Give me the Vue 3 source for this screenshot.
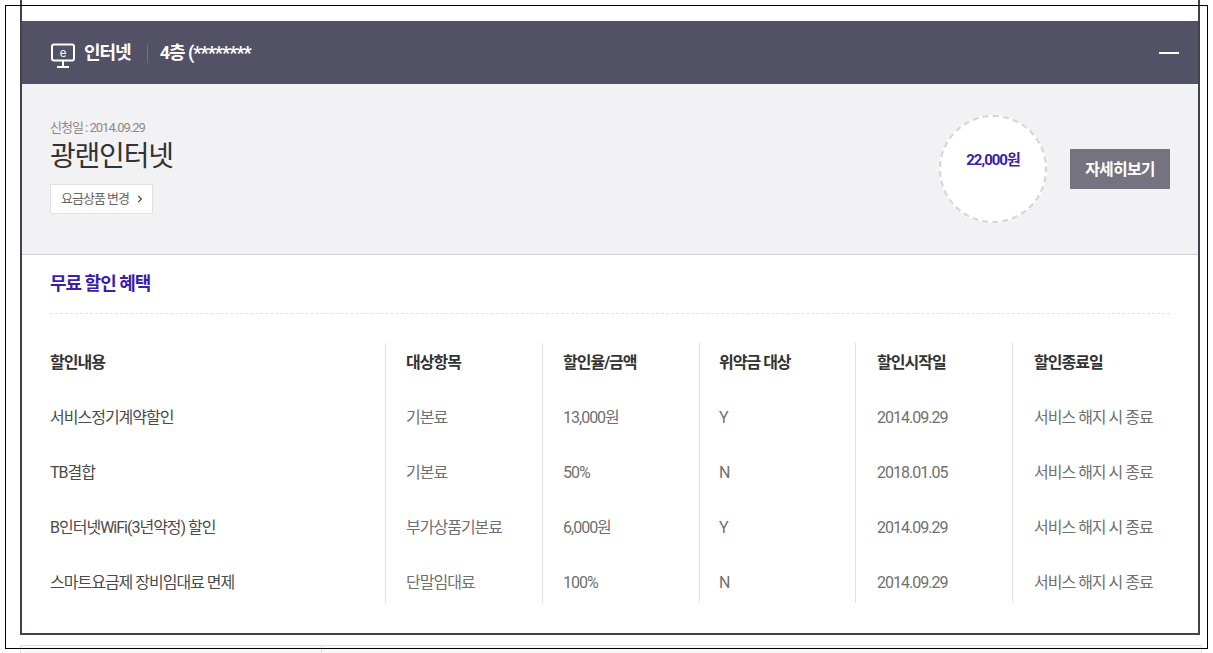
<script setup>
const columns = ['할인내용', '대상항목', '할인율/금액', '위약금 대상', '할인시작일', '할인종료일']

const rows = [
  ['서비스정기계약할인', '기본료', '13,000원', 'Y', '2014.09.29', '서비스 해지 시 종료'],
  ['TB결합', '기본료', '50%', 'N', '2018.01.05', '서비스 해지 시 종료'],
  ['B인터넷WiFi(3년약정) 할인', '부가상품기본료', '6,000원', 'Y', '2014.09.29', '서비스 해지 시 종료'],
  ['스마트요금제 장비임대료 면제', '단말임대료', '100%', 'N', '2014.09.29', '서비스 해지 시 종료'],
]
</script>

<template>
  <div class="page">
    <div class="frame" />
    <section class="card">
      <header class="head">
        <svg class="tv" width="26" height="26" viewBox="0 0 26 26" fill="none" stroke="#fff" stroke-width="2">
          <rect x="2" y="1.5" width="22" height="16" rx="2" />
          <path d="M13 18v5M7 24h12" />
          <text x="13" y="13.5" text-anchor="middle" class="tv-e">e</text>
        </svg>
        <span class="head-title">인터넷</span>
        <span class="head-sep" />
        <span class="head-addr">4층 (********</span>
        <span class="head-close" />
      </header>

      <div class="summary">
        <div class="info">
          <p class="date">신청일 : 2014.09.29</p>
          <h2 class="product">광랜인터넷</h2>
          <button class="change">
            요금상품 변경
            <svg width="6" height="8" viewBox="0 0 6 8" fill="none" stroke="#444" stroke-width="1.2"><path d="M1.2 .8 4.4 4 1.2 7.2" /></svg>
          </button>
        </div>
        <div class="price"><span>22,000원</span></div>
        <button class="detail">자세히보기</button>
      </div>

      <div class="benefit">
        <h3 class="benefit-title">무료 할인 혜택</h3>
        <div class="table">
          <template v-for="(name, c) in columns" :key="name">
            <div class="cell th" :class="{ first: c === 0 }">{{ name }}</div>
          </template>
          <template v-for="(row, r) in rows" :key="r">
            <div
              v-for="(val, c) in row"
              :key="c"
              class="cell"
              :class="{ first: c === 0, last: r === rows.length - 1 }"
            >{{ val }}</div>
          </template>
        </div>
      </div>
    </section>
    <div class="next"><div class="next-left" /></div>
  </div>
</template>

<style>
html, body { margin: 0; background: #fff; overflow: hidden; }
</style>

<style scoped>
.page { position: relative; height: 653px; overflow: hidden; padding-left: 20px; box-sizing: border-box; font-family: Roboto, "Noto Sans CJK KR", sans-serif; }
.frame { position: absolute; left: 5px; top: 5px; width: 1201px; height: 642px; border: 1px solid #000; z-index: 2; pointer-events: none; }

.card { width: 1180px; height: 635px; box-sizing: border-box; padding-top: 21px; border: 2px solid #42414f; border-top: 0; background: #fff; }

.head { display: flex; align-items: center; height: 63px; padding: 0 19px 0 28px; background: #535165; color: #fff; }
.tv { margin-top: 6px; margin-right: 8px; }
.tv-e { font-size: 12px; font-weight: 400; fill: #fff; stroke: none; font-family: "Liberation Sans", sans-serif; }
.head-title { margin-top: -4px; font-size: 18px; font-weight: 700; letter-spacing: -1px; }
.head-sep { width: 1px; height: 18px; margin: 2px 12px 0 16px; background: #74727f; }
.head-addr { margin-top: -4px; font-size: 18px; font-weight: 700; letter-spacing: -1px; }
.head-close { width: 20px; height: 2px; margin-left: auto; background: #fff; }

.summary { display: flex; align-items: flex-start; height: 171px; box-sizing: border-box; padding: 31px 28px 0; background: #f2f2f5; border-bottom: 1px solid #cfcfd3; }
.info { flex: 1; }
.date { margin: 0; padding-top: 1px; font-size: 13px; line-height: 24px; letter-spacing: -1px; color: #8a8a8a; }
.product { margin: 1px 0 0; font-size: 28px; line-height: 32px; font-weight: 400; letter-spacing: -1.2px; color: #333; }
.change { display: flex; align-items: center; gap: 8px; height: 30px; margin-top: 11px; padding: 0 9px 3px 10px; background: #fff; border: 1px solid #e0e0e0; font: inherit; font-size: 13px; letter-spacing: -1px; color: #666; }
.change svg { margin-top: 3px; }
.price { display: flex; justify-content: center; width: 104px; height: 104px; margin-right: 23px; border: 2px dashed #d5d5d5; border-radius: 50%; background: #fff; }
.price span { margin-top: 33px; font-size: 15px; line-height: 20px; font-weight: 700; letter-spacing: -1px; color: #3a1fa8; }
.detail { width: 100px; height: 40px; margin-top: 34px; padding: 0 0 2px; background: #75737f; border: 0; color: #fff; font: inherit; font-size: 16px; font-weight: 700; letter-spacing: -.8px; }

.benefit { padding: 0 28px; }
.benefit-title { margin: 0; height: 59px; box-sizing: border-box; padding-top: 17px; border-bottom: 1px dashed #e3e3e3; font-size: 18px; line-height: 24px; font-weight: 700; letter-spacing: -1px; color: #3a1fa8; }
.table { display: grid; grid-template-columns: 335px 157px 157px 156px 157px 158px; margin-top: 29px; }
.cell { padding: 10px 0 25px 20px; border-left: 1px solid #e2e2e2; font-size: 16px; line-height: 20px; letter-spacing: -1px; color: #707070; white-space: nowrap; }
.cell:nth-child(6n+4) { padding-left: 19px; }
.cell:nth-child(6n+5), .cell:nth-child(6n) { padding-left: 21px; }
.cell.first { padding-left: 0; border-left: 0; color: #4a4a4a; }
.cell.last { padding-bottom: 10px; }
.th, .th.first { font-weight: 700; color: #333; }

.next { height: 8px; margin-top: 10px; width: 1180px; background: #f9f9f9; border: 1px solid #e0e0e0; box-sizing: content-box; }
.next-left { width: 300px; height: 100%; border-right: 1px solid #e0e0e0; }
</style>
